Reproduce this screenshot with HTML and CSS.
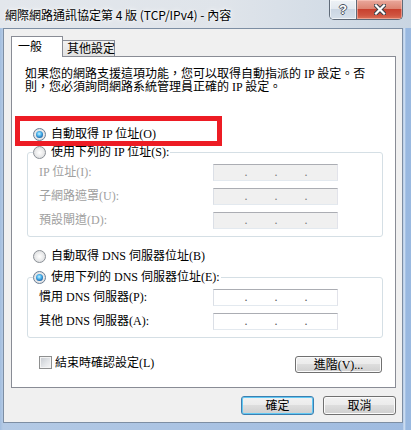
FILE: index.html
```html
<!DOCTYPE html>
<html lang="zh-Hant">
<head>
<meta charset="utf-8">
<title>TCP/IPv4 內容</title>
<link rel="stylesheet" href="styles.css">
</head>
<body>
<div class="window">
  <div class="titlebar">
    <span class="title">網際網路通訊協定第 4 版 (TCP/IPv4) - 內容</span>
    <div class="caption-btns">
      <div class="cap-help">?</div>
      <div class="cap-close">
        <svg width="12" height="11" viewBox="0 0 12 11">
          <path d="M2 1.5 L10 9.5 M10 1.5 L2 9.5" stroke="#3b4048" stroke-width="4.2" stroke-linecap="square" fill="none"/>
          <path d="M2 1.5 L10 9.5 M10 1.5 L2 9.5" stroke="#ffffff" stroke-width="2.2" stroke-linecap="square" fill="none"/>
        </svg>
      </div>
    </div>
  </div>
  <div class="client">
    <div class="tabs">
      <div class="tab active">一般</div>
      <div class="tab">其他設定</div>
    </div>
    <div class="panel">
      <p class="intro">如果您的網路支援這項功能，您可以取得自動指派的 IP 設定。否<br>則，您必須詢問網路系統管理員正確的 IP 設定。</p>

      <div class="opt first">
        <span class="radio checked"></span><span class="opt-text">自動取得 IP 位址(O)</span>
      </div>

      <div class="group g1">
        <div class="legend">
          <span class="radio"></span><span class="opt-text">使用下列的 IP 位址(S):</span>
        </div>
        <div class="row">
          <span class="lbl disabled">IP 位址(I):</span>
          <div class="ipfield disabled"><span class="seg s1"></span><span class="dot">.</span><span class="seg"></span><span class="dot">.</span><span class="seg"></span><span class="dot">.</span></div>
        </div>
        <div class="row">
          <span class="lbl disabled">子網路遮罩(U):</span>
          <div class="ipfield disabled"><span class="seg s1"></span><span class="dot">.</span><span class="seg"></span><span class="dot">.</span><span class="seg"></span><span class="dot">.</span></div>
        </div>
        <div class="row">
          <span class="lbl disabled">預設閘道(D):</span>
          <div class="ipfield disabled"><span class="seg s1"></span><span class="dot">.</span><span class="seg"></span><span class="dot">.</span><span class="seg"></span><span class="dot">.</span></div>
        </div>
      </div>

      <div class="opt dns-auto">
        <span class="radio"></span><span class="opt-text">自動取得 DNS 伺服器位址(B)</span>
      </div>

      <div class="group g2">
        <div class="legend">
          <span class="radio checked"></span><span class="opt-text">使用下列的 DNS 伺服器位址(E):</span>
        </div>
        <div class="row">
          <span class="lbl">慣用 DNS 伺服器(P):</span>
          <div class="ipfield"><span class="seg s1"></span><span class="dot">.</span><span class="seg"></span><span class="dot">.</span><span class="seg"></span><span class="dot">.</span></div>
        </div>
        <div class="row">
          <span class="lbl">其他 DNS 伺服器(A):</span>
          <div class="ipfield"><span class="seg s1"></span><span class="dot">.</span><span class="seg"></span><span class="dot">.</span><span class="seg"></span><span class="dot">.</span></div>
        </div>
      </div>

      <div class="bottom-row">
        <div class="chk-wrap"><span class="check"></span><span class="chk-text">結束時確認設定(L)</span></div>
        <div class="btn adv">進階(V)...</div>
      </div>

      <div class="annot"></div>
    </div>
    <div class="footer">
      <div class="btn default">確定</div>
      <div class="btn">取消</div>
    </div>
  </div>
</div>
</body>
</html>
```

FILE: styles.css
```css
html, body {
  margin: 0;
  padding: 0;
}
body {
  width: 411px;
  height: 430px;
  overflow: hidden;
  background: #a9c3e2;
  font-family: "Liberation Serif", "Noto Sans CJK TC", serif;
  font-size: 12px;
  color: #000;
}
.window {
  width: 411px;
  height: 430px;
  display: flex;
  flex-direction: column;
  background: linear-gradient(to right, #a3bedf 0, #b4cae5 3px, #9fbbe0 403px, #dce8f5 404px, #98b8e0 406px, #9ab9e0 411px);
}
.titlebar {
  height: 28px;
  display: flex;
  align-items: flex-start;
  padding-left: 5px;
  background: linear-gradient(to right, #e3e7ec 0, #dfe4ea 55%, #d3dce6 80%, #c9d5e2 100%);
}
.title {
  font-family: "Noto Sans CJK TC", sans-serif;
  font-size: 12px;
  line-height: 16px;
  padding-top: 7px;
  color: #000;
  text-shadow: 0 0 6px #fff, 0 0 3px #fff;
  white-space: nowrap;
}
.caption-btns {
  margin-left: auto;
  margin-right: 8px;
  display: flex;
  height: 20px;
  border: 1px solid #5f6a78;
  border-top: none;
  border-radius: 0 0 5px 5px;
  overflow: hidden;
  box-sizing: border-box;
}
.cap-help {
  width: 26px;
  display: flex;
  align-items: center;
  justify-content: center;
  border-right: 1px solid #5f6a78;
  background: linear-gradient(#eef2f6 0, #e3e9f0 45%, #cbd6e3 50%, #d6e0ea 100%);
  box-shadow: inset 0 0 0 1px rgba(255,255,255,0.6);
  font-family: "Liberation Sans", sans-serif;
  font-weight: bold;
  font-size: 13px;
  color: #fff;
  text-shadow: -1px 0 #4b5360, 1px 0 #4b5360, 0 -1px #4b5360, 0 1px #4b5360;
}
.cap-close {
  width: 45px;
  display: flex;
  align-items: center;
  justify-content: center;
  background: linear-gradient(#e9a89c 0, #dd8573 45%, #c8412f 50%, #cf5440 80%, #dc7258 100%);
  box-shadow: inset 0 0 0 1px rgba(255,210,200,0.5);
}
.client {
  margin: 0 8px 7px 3px;
  flex: 1;
  border: 1px solid #7d8ea3;
  background: #f0f0f0;
  padding: 7px 6px 7px 7px;
  display: flex;
  flex-direction: column;
}
.tabs {
  display: flex;
  align-items: flex-end;
  height: 20px;
  flex: none;
  position: relative;
  z-index: 2;
}
.tab {
  box-sizing: border-box;
  border: 1px solid #898c95;
  border-bottom: none;
  line-height: 14px;
  white-space: nowrap;
}
.tab.active {
  width: 52px;
  height: 21px;
  margin-bottom: -1px;
  background: #fff;
  padding: 3px 0 0 6px;
}
.tab:not(.active) {
  width: 52px;
  height: 16px;
  border-left: none;
  background: linear-gradient(#f2f2f2, #e2e2e2);
  padding: 1px 0 0 4px;
}
.panel {
  position: relative;
  height: 332px;
  flex: none;
  box-sizing: border-box;
  border: 1px solid #898c95;
  background: #fff;
  padding: 11px 0 0 0;
  display: flex;
  flex-direction: column;
  align-items: flex-start;
}
.intro {
  margin: 0 0 0 13px;
  line-height: 13px;
  height: 26px;
  white-space: nowrap;
}
.opt {
  display: flex;
  align-items: center;
  height: 16px;
  margin-left: 21px;
  flex: none;
}
.opt.first {
  margin-top: 32px;
}
.opt.dns-auto {
  margin-top: 11px;
}
.opt-text, .chk-text, .lbl {
  white-space: nowrap;
  line-height: 16px;
}
.radio {
  width: 13px;
  height: 13px;
  box-sizing: border-box;
  border-radius: 50%;
  border: 1px solid #8b9096;
  background: radial-gradient(circle at 50% 50%, #ffffff 0, #f1f1f1 35%, #d3d5d8 100%);
  position: relative;
  margin-right: 5px;
  flex: none;
}
.radio.checked {
  border-color: #6b7f95;
}
.radio.checked::after {
  content: "";
  position: absolute;
  left: 2px;
  top: 2px;
  width: 7px;
  height: 7px;
  border-radius: 50%;
  background: radial-gradient(circle at 45% 40%, #c8f2ff 0, #49b2ec 40%, #1a62a8 75%, #0c3f78 100%);
}
.group {
  margin-left: 15px;
  width: 356px;
  flex: none;
  box-sizing: border-box;
  border: 1px solid #d5dfe5;
  border-radius: 3px;
  padding: 0 0 4px 0;
  display: flex;
  flex-direction: column;
  align-items: stretch;
}
.g1 {
  margin-top: 10px;
}
.g2 {
  margin-top: 13px;
}
.legend {
  align-self: flex-start;
  display: flex;
  align-items: center;
  height: 16px;
  margin: -9px 0 0 5px;
  padding-right: 1px;
  background: #fff;
}
.row {
  display: flex;
  align-items: center;
  height: 24px;
  padding-left: 11px;
}
.lbl {
  width: 174px;
  flex: none;
}
.lbl.disabled {
  color: #a0a0a0;
}
.ipfield {
  width: 125px;
  height: 17px;
  flex: none;
  box-sizing: border-box;
  border: 1px solid;
  border-color: #abadb3 #e2e3ea #e3e9ef #dbdfe6;
  background: #fff;
  display: flex;
  align-items: flex-start;
  padding-top: 1px;
}
.ipfield.disabled {
  background: #f0f0f0;
}
.seg {
  width: 26px;
}
.seg.s1 {
  width: 30px;
}
.dot {
  width: 4px;
  text-align: center;
  line-height: 12px;
  color: #555;
}
.ipfield.disabled .dot {
  color: #777;
}
.bottom-row {
  margin-top: 18px;
  height: 18px;
  width: 100%;
  box-sizing: border-box;
  flex: none;
  display: flex;
  align-items: flex-start;
  justify-content: space-between;
  padding: 0 13px 0 27px;
}
.chk-wrap {
  display: flex;
  align-items: center;
  height: 13px;
}
.check {
  width: 13px;
  height: 13px;
  flex: none;
  box-sizing: border-box;
  border: 1px solid #8e8f8f;
  background: linear-gradient(135deg, #c4c8ce 0, #e3e5e8 55%, #f7f7f7 100%);
  box-shadow: inset 0 0 0 1px #f4f4f4;
  margin-right: 3px;
}
.btn {
  box-sizing: border-box;
  border: 1px solid #707070;
  border-radius: 3px;
  background: linear-gradient(#f2f2f2 0, #ebebeb 48%, #dddddd 50%, #cfcfcf 100%);
  box-shadow: inset 0 0 0 1px #fbfbfb;
  display: flex;
  align-items: center;
  justify-content: center;
  line-height: 14px;
  white-space: nowrap;
}
.btn.adv {
  width: 87px;
  height: 17px;
}
.footer {
  display: flex;
  justify-content: flex-end;
  gap: 9px;
  margin-top: 8px;
}
.footer .btn {
  width: 73px;
  height: 19px;
}
.btn.default {
  border-color: #3c7fb1;
  box-shadow: inset 0 0 0 1px #61c8f3;
}
.annot {
  position: absolute;
  left: 3px;
  top: 59px;
  width: 207px;
  height: 30px;
  box-sizing: border-box;
  border: 5px solid #ed1c24;
  pointer-events: none;
}
```
